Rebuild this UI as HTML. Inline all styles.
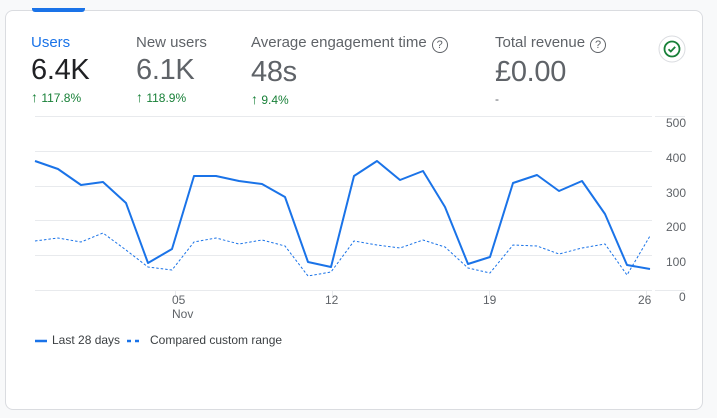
<!DOCTYPE html>
<html><head><meta charset="utf-8"><style>
*{margin:0;padding:0;box-sizing:border-box}
body{width:717px;height:418px;background:#f8f9fa;font-family:"Liberation Sans",Arial,sans-serif;position:relative;overflow:hidden}
.card{position:absolute;left:5px;top:10px;width:698px;height:400px;background:#fff;border:1px solid #dadce0;border-radius:8px}
.tab{position:absolute;left:32px;top:8px;width:53px;height:4px;background:#1a73e8;border-radius:0 0 3px 3px}
.m{position:absolute;top:34px}
.lbl{font-size:15px;color:#5f6368;white-space:nowrap}
.val{font-size:29px;color:#5f6368;margin-top:2px;letter-spacing:-0.3px;line-height:34px}
.ch{font-size:12px;color:#188038;margin-top:2px;line-height:16px}
.ch b{font-size:14px;font-weight:bold}
.q{display:inline-block;width:16px;height:16px;border:1.3px solid #5f6368;border-radius:50%;font-size:11px;text-align:center;line-height:14px;margin-left:5px;vertical-align:-1px}
.ax{position:absolute;font-size:12px;color:#5f6368}
.leg{position:absolute;top:333px;font-size:12px;color:#3c4043}
</style></head><body>
<div class="card"></div>
<div class="tab"></div>
<div class="m" style="left:31px"><div class="lbl" style="color:#1a73e8">Users</div><div class="val" style="color:#202124">6.4K</div><div class="ch"><b>↑</b> 117.8%</div></div>
<div class="m" style="left:136px"><div class="lbl">New users</div><div class="val">6.1K</div><div class="ch"><b>↑</b> 118.9%</div></div>
<div class="m" style="left:251px"><div class="lbl">Average engagement time<span class="q">?</span></div><div class="val">48s</div><div class="ch"><b>↑</b> 9.4%</div></div>
<div class="m" style="left:495px"><div class="lbl">Total revenue<span class="q">?</span></div><div class="val">£0.00</div><div class="ch" style="color:#5f6368">-</div></div>
<svg style="position:absolute;left:658px;top:35px" width="28" height="28" viewBox="0 0 28 28"><circle cx="14" cy="14" r="13" fill="#fff" stroke="#dadce0"/><circle cx="14" cy="14" r="7.5" fill="none" stroke="#188038" stroke-width="1.8"/><path d="M10.5 14.2l2.3 2.3 4.4-4.6" fill="none" stroke="#188038" stroke-width="1.8"/></svg>
<svg style="position:absolute;left:0;top:0" width="717" height="418">
<g stroke="#e8eaed" stroke-width="1">
<line x1="35" y1="116.5" x2="652" y2="116.5"/><line x1="35" y1="151.5" x2="652" y2="151.5"/><line x1="35" y1="186.5" x2="652" y2="186.5"/><line x1="35" y1="220.5" x2="652" y2="220.5"/><line x1="35" y1="255.5" x2="652" y2="255.5"/><line x1="35" y1="290.5" x2="652" y2="290.5"/>
<line x1="655" y1="116.5" x2="685" y2="116.5"/><line x1="655" y1="290.5" x2="685" y2="290.5"/>
<line x1="175.5" y1="290" x2="175.5" y2="296"/><line x1="332.5" y1="290" x2="332.5" y2="296"/><line x1="489.5" y1="290" x2="489.5" y2="296"/><line x1="646.5" y1="290" x2="646.5" y2="296"/>
</g>
<polyline fill="none" stroke="#1a73e8" stroke-width="1" stroke-dasharray="2.5,2" points="35,241 58,238 81,242 103,233 126,250 148,267 172,270 194,242 216,238 239,244 262,240 285,246 308,276 331,272 354,241 377,245 400,248 423,240 445,247 468,268 490,273 513,245 537,246 559,254 582,248 605,244 627,275 650,236"/>
<polyline fill="none" stroke="#1a73e8" stroke-width="2" stroke-linejoin="round" points="35,161 58,169 81,185 103,182 126,203 148,263 172,249 194,176 216,176 239,181 262,184 285,197 308,262 331,267 354,176 377,161 400,180 423,171 445,207 468,264 490,257 513,183 537,175 559,191 582,181 605,214 627,265 650,269"/>
<line x1="35" y1="341" x2="47" y2="341" stroke="#1a73e8" stroke-width="2.5"/>
<line x1="127" y1="341" x2="131" y2="341" stroke="#1a73e8" stroke-width="2.5"/><line x1="135" y1="341" x2="139" y2="341" stroke="#1a73e8" stroke-width="2.5"/>
</svg>
<div class="ax" style="left:666px;top:116px">500</div>
<div class="ax" style="left:666px;top:151px">400</div>
<div class="ax" style="left:666px;top:186px">300</div>
<div class="ax" style="left:666px;top:220px">200</div>
<div class="ax" style="left:666px;top:255px">100</div>
<div class="ax" style="left:679px;top:290px">0</div>
<div class="ax" style="left:172px;top:293px;line-height:14px">05<br>Nov</div>
<div class="ax" style="left:325px;top:293px">12</div>
<div class="ax" style="left:483px;top:293px">19</div>
<div class="ax" style="left:638px;top:293px">26</div>
<div class="leg" style="left:52px">Last 28 days</div>
<div class="leg" style="left:150px">Compared custom range</div>
</body></html>
